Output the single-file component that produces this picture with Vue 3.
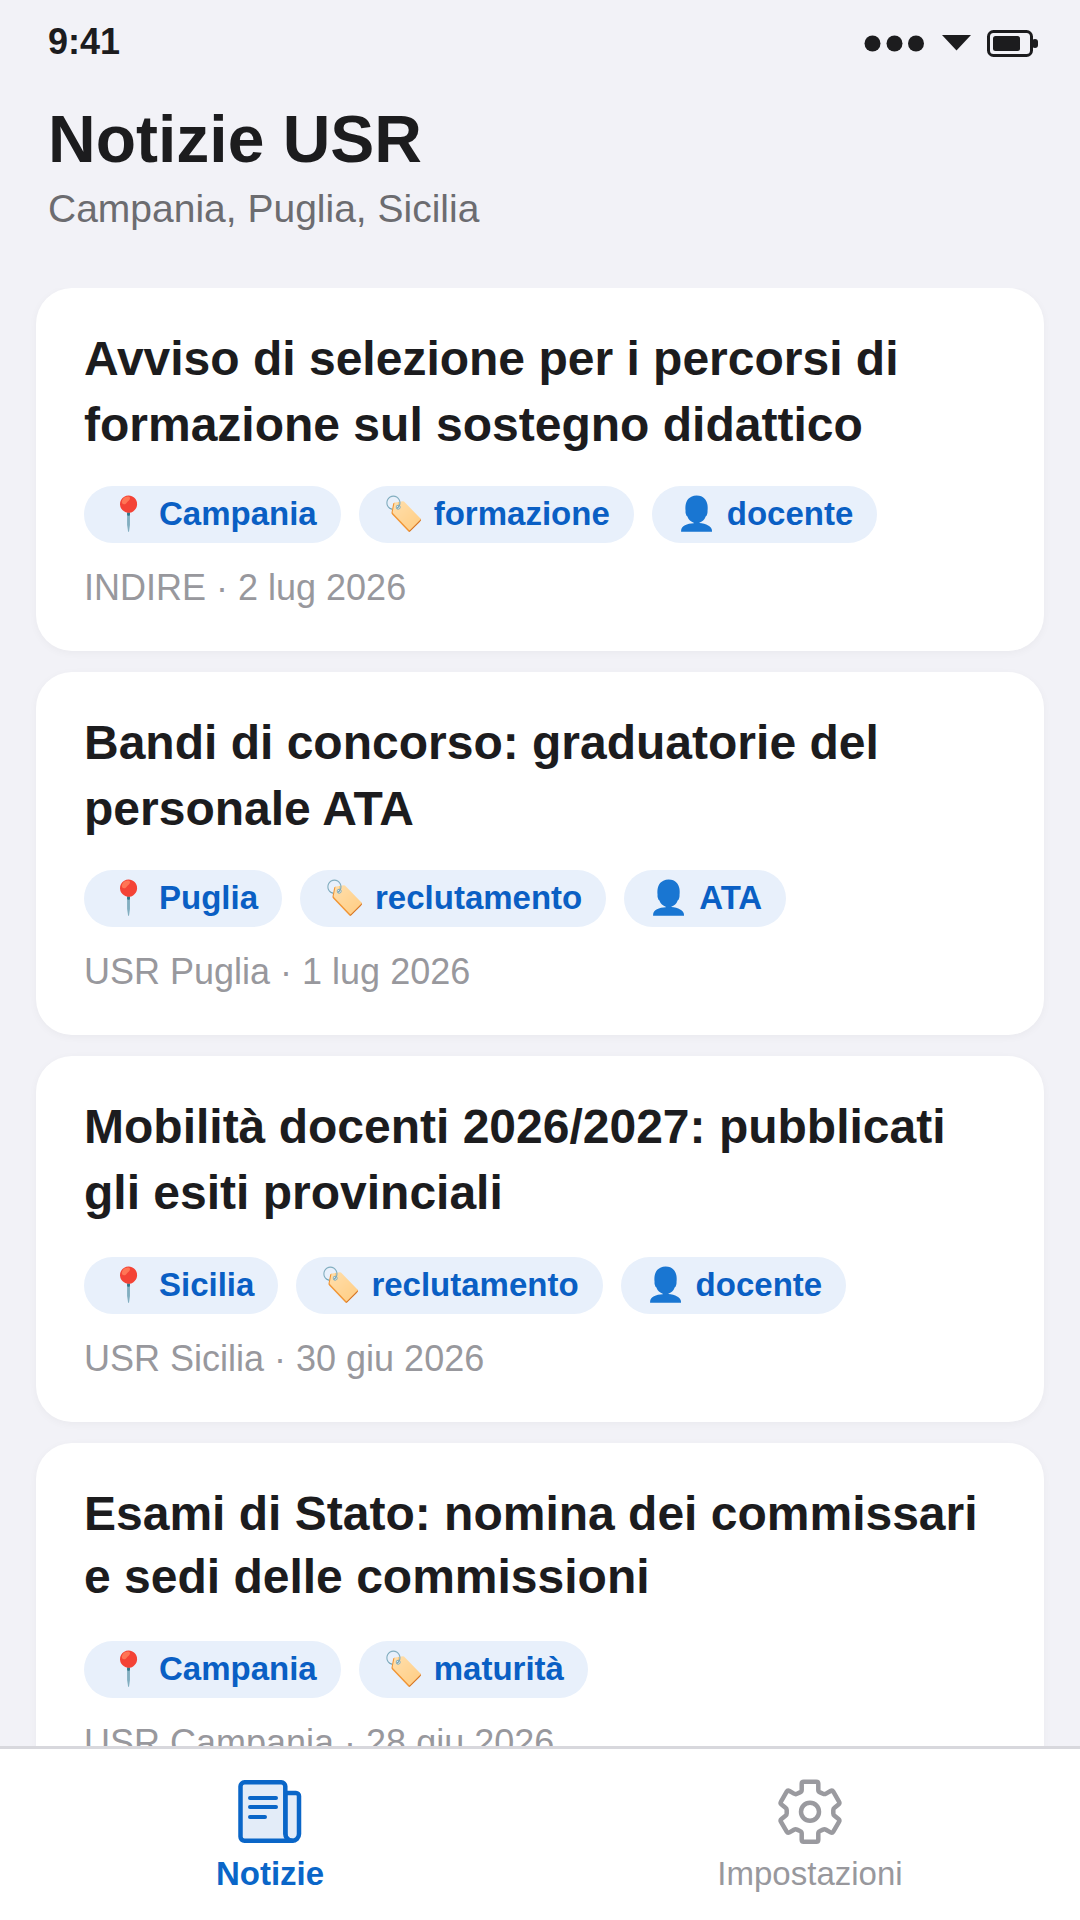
<script setup>
const cards = [
  { title: 'Avviso di selezione per i percorsi di formazione sul sostegno didattico', tags: [['📍','Campania'],['🏷️','formazione'],['👤','docente']], meta: 'INDIRE · 2 lug 2026', kind: '' },
  { title: 'Bandi di concorso: graduatorie del personale ATA', tags: [['📍','Puglia'],['🏷️','reclutamento'],['👤','ATA']], meta: 'USR Puglia · 1 lug 2026', kind: '' },
  { title: 'Mobilità docenti 2026/2027: pubblicati gli esiti provinciali', tags: [['📍','Sicilia'],['🏷️','reclutamento'],['👤','docente']], meta: 'USR Sicilia · 30 giu 2026', kind: 'loose' },
  { title: 'Esami di Stato: nomina dei commissari e sedi delle commissioni', tags: [['📍','Campania'],['🏷️','maturità']], meta: 'USR Campania · 28 giu 2026', kind: 'tight' },
]
</script>

<template>
  <div class="screen">
    <div class="status">
      <span class="time">9:41</span>
      <div class="status-icons">
        <svg width="61" height="17" viewBox="0 0 61 17"><circle cx="8.5" cy="8.5" r="8"/><circle cx="30.5" cy="8.5" r="8"/><circle cx="52" cy="8.5" r="8"/></svg>
        <svg width="30" height="16" viewBox="0 0 30 16"><path d="M1 0H30L15.5 15.5Z"/></svg>
        <svg width="51" height="27" viewBox="0 0 51 27"><rect x="1.5" y="1.5" width="43" height="24" rx="5" fill="none" stroke="#1c1c1e" stroke-width="3"/><rect x="6" y="6" width="27" height="15" rx="2.5"/><rect x="45" y="9" width="6" height="9" rx="3"/></svg>
      </div>
    </div>
    <header class="head">
      <h1>Notizie USR</h1>
      <p>Campania, Puglia, Sicilia</p>
    </header>
    <main class="list">
      <article v-for="c in cards" :key="c.title" class="card" :class="c.kind">
        <h2>{{ c.title }}</h2>
        <div class="tags">
          <span v-for="t in c.tags" :key="t[1]" class="tag"><span>{{ t[0] }}</span> {{ t[1] }}</span>
        </div>
        <div class="meta">{{ c.meta }}</div>
      </article>
    </main>
    <nav class="tabs">
      <div class="tab active">
        <svg width="66" height="65" viewBox="0 0 66 65" fill="#e3ecf8" stroke="#0a66c8" stroke-width="4.5" stroke-linejoin="round" stroke-linecap="round">
          <g transform="translate(1 1)">
            <path d="M47.3 13H58a3 3 0 0 1 3 3V54a6.85 6.85 0 0 1-13.7 0Z"/>
            <path d="M2.5 6.3a4 4 0 0 1 4-4H43.3a4 4 0 0 1 4 4V54a6.85 6.85 0 0 0 6.85 6.85H6.5a4 4 0 0 1-4-4Z"/>
            <path d="M12 18H38M12 27H38M12 37H27" fill="none" stroke-width="4"/>
          </g>
        </svg>
        <span>Notizie</span>
      </div>
      <div class="tab">
        <svg width="66" height="65" viewBox="0 0 66 65" fill="none" stroke="#9a9a9f" stroke-width="4.5" stroke-linejoin="round">
          <path d="M26.7 2.7H39.3Q41.3 2.7 41.3 4.7V11Q41.3 12.7 43 13.4L46 14.8Q47.5 15.5 49 14.6L53.5 12Q55.3 11 56.3 12.7L62 22.6Q63 24.3 61.5 25.5L57.5 28.7Q56.3 29.7 56.3 31V34.4Q56.3 35.7 57.5 36.7L61.5 39.9Q63 41.1 62 42.8L56.3 52.7Q55.3 54.4 53.5 53.4L49 50.8Q47.5 49.9 46 50.6L43 52Q41.3 52.7 41.3 54.4V60.7Q41.3 62.7 39.3 62.7H26.7Q24.7 62.7 24.7 60.7V54.4Q24.7 52.7 23 52L20 50.6Q18.5 49.9 17 50.8L12.5 53.4Q10.7 54.4 9.7 52.7L4 42.8Q3 41.1 4.5 39.9L8.5 36.7Q9.7 35.7 9.7 34.4V31Q9.7 29.7 8.5 28.7L4.5 25.5Q3 24.3 4 22.6L9.7 12.7Q10.7 11 12.5 12L17 14.6Q18.5 15.5 20 14.8L23 13.4Q24.7 12.7 24.7 11V4.7Q24.7 2.7 26.7 2.7Z"/>
          <circle cx="33" cy="32.7" r="9"/>
        </svg>
        <span>Impostazioni</span>
      </div>
    </nav>
  </div>
</template>

<style>
html, body { margin: 0; background: #f2f2f7; }
</style>
<style scoped>
.screen { width: 1080px; height: 1920px; background: #f2f2f7; display: flex; flex-direction: column; overflow: hidden; font-family: "Liberation Sans", Arial, sans-serif; color: #1c1c1e; }
.status { height: 84px; flex: none; display: flex; justify-content: space-between; align-items: center; padding: 0 42px 0 48px; box-sizing: border-box; }
.time { font-size: 36px; font-weight: 700; }
.status-icons { display: flex; align-items: center; gap: 16px; fill: #1c1c1e; padding-top: 2px; }
.head { padding: 17px 48px 0; height: 204px; flex: none; box-sizing: border-box; }
h1 { margin: 0; font-size: 66px; line-height: 76px; font-weight: 700; }
p { margin: 9px 0 0; font-size: 39px; line-height: 46px; color: #6c6c70; }
.list { flex: 1; min-height: 0; overflow: hidden; padding: 0 36px; display: flex; flex-direction: column; gap: 21px; }
.card { flex: none; background: #fff; border-radius: 36px; padding: 38px 48px 42px; box-shadow: 0 2px 8px rgba(0,0,0,.04); }
h2 { margin: 0; font-size: 48px; line-height: 66px; font-weight: 700; }
.tags { display: flex; gap: 18px; margin-top: 28px; }
.loose .tags { margin-top: 31px; }
.tight h2 { line-height: 63px; padding-top: 1px; }
.tight .tags { margin-top: 33px; }
.tag { box-sizing: border-box; height: 57px; border-radius: 29px; background: #e8f0fb; color: #0a5fc4; font-size: 33px; font-weight: 700; padding: 0 24px 2px; display: flex; align-items: center; gap: 10px; white-space: nowrap; }
.meta { margin-top: 24px; font-size: 36px; line-height: 42px; color: #98989d; }
.tabs { flex: none; height: 174px; box-sizing: border-box; border-top: 3px solid #d8d8dd; background: #fff; display: flex; }
.tab { flex: 1; display: flex; flex-direction: column; align-items: center; padding-top: 30px; gap: 11px; font-size: 33px; color: #98989d; }
.tab.active { color: #0a66c8; font-weight: 700; }
</style>
